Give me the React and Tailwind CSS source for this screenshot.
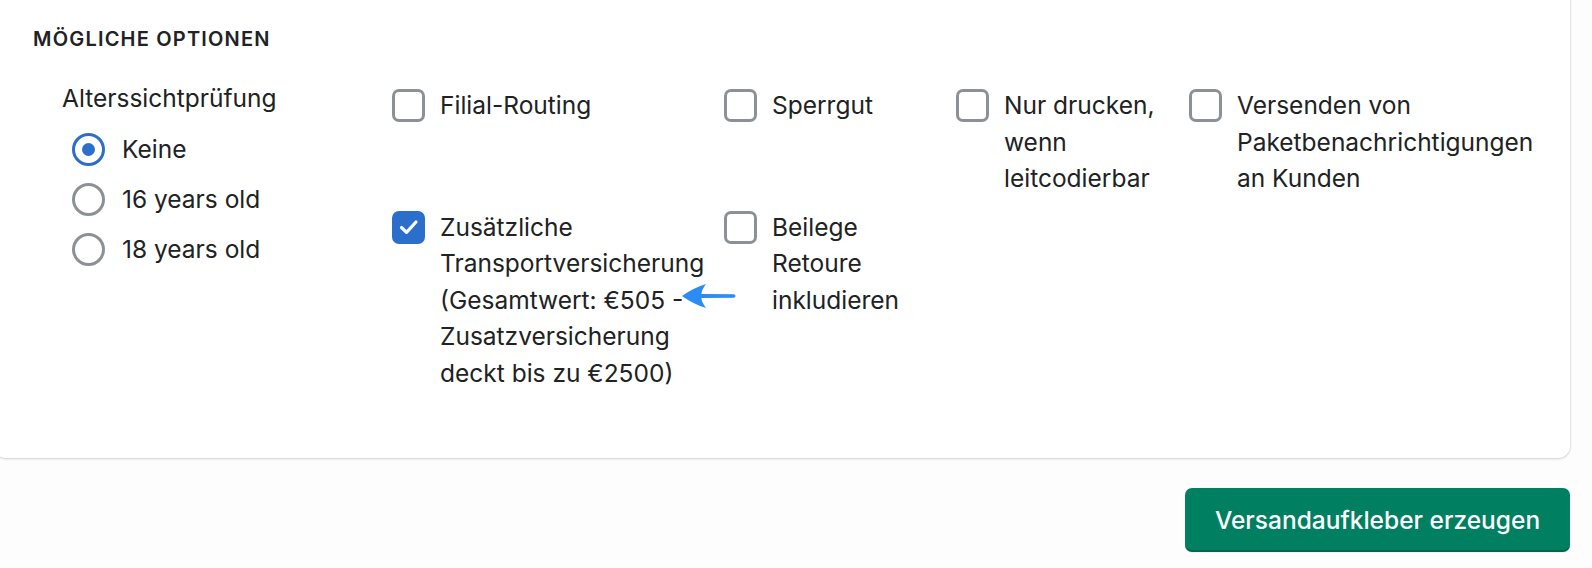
import React, { useState } from 'react';

const font = { fontFamily: 'Inter, "Noto Sans", sans-serif' };

const Checkbox = ({ checked, onChange }) => (
  <button
    type="button"
    onClick={onChange}
    className={`mt-[2px] w-[33px] h-[33px] shrink-0 rounded-[7px] flex items-center justify-center ${
      checked ? 'bg-[#2c6ecb] border-[3px] border-[#2c6ecb]' : 'bg-white border-[3px] border-[#8c9196]'
    }`}
  >
    {checked && (
      <svg width="24" height="24" viewBox="0 0 24 24" fill="none">
        <path d="M4.5 12.5l5 4.8 9.5-10.3" stroke="white" strokeWidth="3.2" strokeLinecap="round" strokeLinejoin="round" />
      </svg>
    )}
  </button>
);

const Radio = ({ checked, label, onClick }) => (
  <button type="button" onClick={onClick} className="flex items-center h-[50px] pl-[10px] text-left">
    <span
      className={`w-[33px] h-[33px] rounded-full border-[3px] flex items-center justify-center shrink-0 ${
        checked ? 'border-[#2c6ecb]' : 'border-[#8c9196]'
      }`}
    >
      {checked && <span className="w-[13px] h-[13px] rounded-full bg-[#2c6ecb]" />}
    </span>
    <span className="ml-[17px] text-[24.5px] leading-[36px] text-[#202223]">{label}</span>
  </button>
);

const Option = ({ lines, checked, onChange }) => (
  <div className="flex items-start gap-[15px]">
    <Checkbox checked={checked} onChange={onChange} />
    <div className="text-[24.5px] leading-[36.5px] text-[#202223] whitespace-nowrap">
      {lines.map((l, i) => (
        <div key={i}>{l}</div>
      ))}
    </div>
  </div>
);

export default function App() {
  const [age, setAge] = useState('none');
  const [opts, setOpts] = useState({
    filial: false,
    sperrgut: false,
    drucken: false,
    benachrichtigung: false,
    versicherung: true,
    retoure: false,
  });
  const toggle = (k) => setOpts((o) => ({ ...o, [k]: !o[k] }));

  return (
    <div className="min-h-[568px] w-[1592px] bg-[#fdfdfd] overflow-hidden relative" style={font}>
      <div className="flex flex-col pr-[22px]">
        {/* Card */}
        <div className="ml-[-6px] mt-[-14px] bg-white rounded-[12px] shadow-[0_1px_3px_rgba(0,0,0,0.14),0_0_0_1px_rgba(0,0,0,0.05)] pl-[39px] pt-[41px] pb-[67px] relative">
          <h3 className="text-[20px] leading-[24px] font-semibold tracking-[0.06em] text-[#202223] uppercase">
            Mögliche Optionen
          </h3>

          <div className="flex mt-[29px]">
            <div className="w-[359px] pl-[29px] shrink-0">
              <div className="text-[24.5px] leading-[36px] text-[#202223]">Alterssichtprüfung</div>
              <div className="flex flex-col items-start mt-[8px]">
                <Radio checked={age === 'none'} label="Keine" onClick={() => setAge('none')} />
                <Radio checked={age === '16'} label="16 years old" onClick={() => setAge('16')} />
                <Radio checked={age === '18'} label="18 years old" onClick={() => setAge('18')} />
              </div>
            </div>

            <div className="grid grid-cols-[332px_232px_233px_auto] gap-y-[12px] mt-[7px] relative">
              <Option lines={['Filial-Routing']} checked={opts.filial} onChange={() => toggle('filial')} />
              <Option lines={['Sperrgut']} checked={opts.sperrgut} onChange={() => toggle('sperrgut')} />
              <Option
                lines={['Nur drucken,', 'wenn', 'leitcodierbar']}
                checked={opts.drucken}
                onChange={() => toggle('drucken')}
              />
              <Option
                lines={['Versenden von', 'Paketbenachrichtigungen', 'an Kunden']}
                checked={opts.benachrichtigung}
                onChange={() => toggle('benachrichtigung')}
              />
              <Option
                lines={[
                  'Zusätzliche',
                  'Transportversicherung',
                  '(Gesamtwert: €505 -',
                  'Zusatzversicherung',
                  'deckt bis zu €2500)',
                ]}
                checked={opts.versicherung}
                onChange={() => toggle('versicherung')}
              />
              <Option
                lines={['Beilege', 'Retoure', 'inkludieren']}
                checked={opts.retoure}
                onChange={() => toggle('retoure')}
              />

              {/* annotation arrow */}
              <svg
                className="absolute left-[290px] top-[196px] pointer-events-none"
                width="54"
                height="26"
                viewBox="0 0 54 26"
              >
                <path
                  d="M0 13 Q11 5 24 1 Q19 8 19.5 11 L51.5 11.3 Q53.5 11.5 53.5 13 Q53.5 14.5 51.5 14.7 L19.5 15 Q19 18 24 25 Q11 21 0 13 Z"
                  fill="#2b8cf2"
                />
              </svg>
            </div>
          </div>
        </div>

        <div className="flex justify-end mt-[30px]">
          <button
            type="button"
            className="h-[64px] w-[385px] rounded-[7px] bg-[#008060] text-white text-[24.5px] font-medium shadow-[inset_0_-2px_0_rgba(0,0,0,0.2),0_1px_0_rgba(0,0,0,0.05)]"
          >
            Versandaufkleber erzeugen
          </button>
        </div>
      </div>
    </div>
  );
}
